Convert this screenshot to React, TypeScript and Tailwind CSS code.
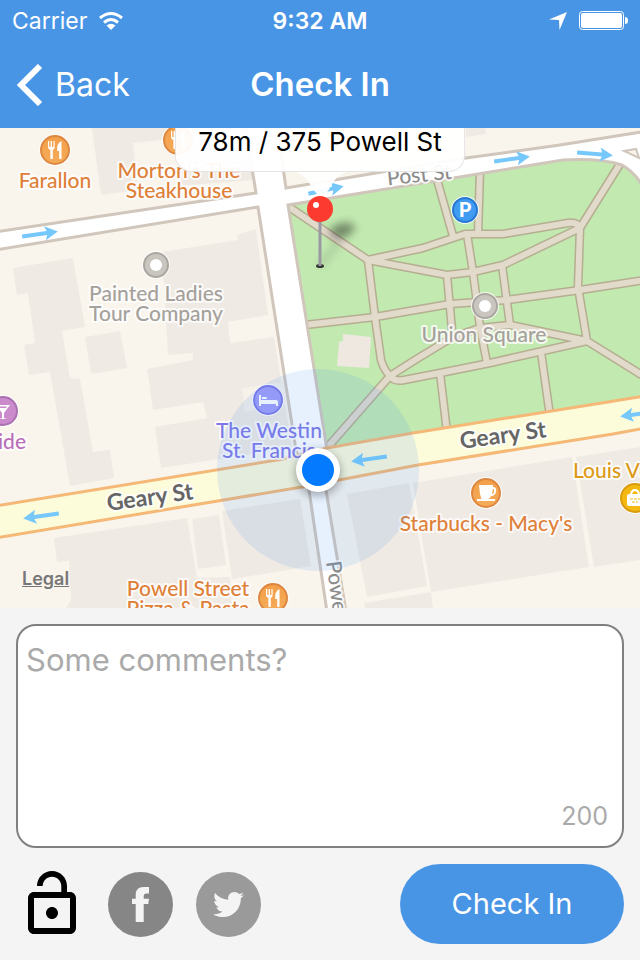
import React, { useState } from 'react';
import { FaTwitter } from 'react-icons/fa';

const MAX_COMMENT = 200;

const buildings = [
  '92,128 180,128 250,128 252,180 178,186 178,138 133,143 138,190 101,195',
  '162,252 238,240 237,235 256,229 268,315 228,322 230,343 274,337 292,448 161,468 155,427 207,418 203,402 153,410 147,369 193,360 193,353 168,355',
  '13,268 73,258 85,327 62,331 70,378 80,379 93,452 110,450 114,478 70,486 50,372 29,375 24,345 35,343 28,293 17,295',
  '85,337 120,331 127,368 91,374',
  '54,538 187,518 197,578 230,577 232,608 66,608 71,600 69,561 57,562',
  '192,519 219,515 226,565 198,569',
  '222,511 300,499 311,566 232,579',
  '347,494 409,483 427,586 367,597',
  '413,483 572,457 589,567 431,592',
  '576,457 640,447 640,560 594,567',
  '364,603 431,592 433,608 365,608',
  '466,128 485,128 486,134 466,137',
];

// Footpaths of Union Square
const footpaths = [
  'M286 205 368 260 423 248 465 234 503 234 568 223Q578 222 580 228',
  'M436 176 453 236',
  'M480 170 478 234',
  'M620 164 580 228 578 287 587 341 645 377',
  'M368 260 447 275 473 272 503 265 580 228',
  'M368 260 375 317 381 360Q384 370 390 376',
  'M305 325 375 317 450 304 507 300 580 290 645 280',
  'M447 275 452 330',
  'M467 234 473 272 480 327 487 363',
  'M502 265 510 325',
  'M390 376 415 360 453 337 480 328 510 325 587 341',
  'M390 376Q394 382 404 380L440 373 490 363 587 341',
  'M390 376 326 449',
  'M440 373 447 432',
  'M541 352 550 416',
];

const Arrow: React.FC<{ x: number; y: number; angle: number }> = ({ x, y, angle }) => (
  <path d="M-18-2H7L5-7 18 0 5 7 7 2H-18Z" fill="#76c8fa" transform={`translate(${x} ${y}) rotate(${angle})`} />
);

const Utensils: React.FC = () => (
  <path
    fill="#fff"
    d="M-7-9h1.200v6h1.400v-6h1.400v6h1.400v-6H-.4V-3Q-.4-.6-2.200 0V9H-4.600V0Q-7-.6-7-3ZM6.500-9V9H4.200V1H2.200Q1.600-7 6.500-9Z"
  />
);

const Marker: React.FC<{ x: number; y: number; fill: string; stroke: string; children?: React.ReactNode }> = ({
  x, y, fill, stroke, children,
}) => (
  <g transform={`translate(${x} ${y})`}>
    <circle r="16" fill="#fff" opacity=".8" />
    <circle r="14" fill={fill} stroke={stroke} strokeWidth="2" />
    {children}
  </g>
);

const PlaceDot: React.FC<{ x: number; y: number }> = ({ x, y }) => (
  <g transform={`translate(${x} ${y})`}>
    <circle r="14" fill="#fff" opacity=".8" />
    <circle r="12" fill="#c9c6c0" stroke="#aaa7a1" strokeWidth="2" />
    <circle r="6" fill="#fff" />
  </g>
);

const MapView: React.FC = () => (
  <svg
    viewBox="0 128 640 480"
    preserveAspectRatio="xMidYMid slice"
    className="absolute inset-0 h-full w-full"
    role="img"
    aria-label="Map"
  >
    <defs>
      <linearGradient id="orange" x1="0" y1="0" x2="0" y2="1">
        <stop offset="0" stopColor="#f3a04a" />
        <stop offset="1" stopColor="#f5ab58" />
      </linearGradient>
      <filter id="soft" x="-50%" y="-50%" width="200%" height="200%">
        <feGaussianBlur stdDeviation="4" />
      </filter>
    </defs>

    <rect y="128" width="640" height="480" fill="#f9f5ed" />
    <g fill="#efeae3">
      {buildings.map((points) => <polygon key={points} points={points} />)}
    </g>
    <polygon points="242,388 283,382 286,405 245,412" fill="#f6f1e9" />

    {/* Park */}
    <path d="M288 205 563 160Q600 158 622 165 640 175 645 190V397L608 402 327 448Z" fill="#c2e9b0" />
    <g fill="none" strokeLinejoin="round">
      <g stroke="#b5ae91" strokeWidth="9">
        {footpaths.map((d) => <path key={d} d={d} />)}
      </g>
      <g stroke="#e2dacb" strokeWidth="6">
        {footpaths.map((d) => <path key={d} d={d} />)}
      </g>
    </g>
    <polygon points="343,334 371,337 369,368 337,366 339,342 343,341" fill="#efe8e1" />

    {/* Streets */}
    <g fill="#fff" stroke="#d0c6bc" strokeWidth="3">
      <path d="M244 120 256 193-5 232V250L258 207 296 450 309 490 327 612H346L326 490 327 450 288 205 563 160Q600 158 622 165 636 173 645 190L650 131 635 133 560 145 466 158 286 188 276 120Z" />
    </g>
    <path d="M624 151 636 149 639 158Z" fill="#f9f5ed" stroke="#d0c6bc" strokeWidth="2" />
    <path d="M-5 506 283 459 327 448 413 433 608 402 645 396V428L613 434 418 465 302 487-5 538Z" fill="#fcfbda" stroke="#f5b877" strokeWidth="3" />

    <Arrow x={40} y={234} angle={-8} />
    <Arrow x={326} y={190} angle={-12} />
    <Arrow x={512} y={159} angle={-8} />
    <Arrow x={595} y={154} angle={5} />
    <Arrow x={41} y={516} angle={172} />
    <Arrow x={369} y={459} angle={172} />
    <Arrow x={638} y={414} angle={172} />

    <Marker x={55} y={150} fill="url(#orange)" stroke="#dd8740"><Utensils /></Marker>
    <Marker x={178} y={140} fill="url(#orange)" stroke="#dd8740"><Utensils /></Marker>
    <Marker x={273} y={598} fill="url(#orange)" stroke="#dd8740"><Utensils /></Marker>
    <Marker x={486} y={493} fill="url(#orange)" stroke="#dd8740">
      <path d="M-7-8H7V-6Q11-6 10-1 9 3 5 3 4 6 2 6H9V8H-9V6H-4Q-6 5-7-8ZM7-4 6 1Q8 1 8-2 8.500-4 7-4Z" fill="#fff" fillRule="evenodd" />
    </Marker>
    <Marker x={635} y={498} fill="#f3b911" stroke="#d99b0c">
      <path d="M-8-2Q-8-4-6-4H-5Q-4-9 0-9 4-9 5-4H6Q8-4 8-2V6Q8 8 6 8H-6Q-8 8-8 6ZM-3-4H3Q2-7 0-7-2-7-3-4Z" fill="#fff" fillRule="evenodd" />
      <path d="M-5 1H5M-3 4H3" stroke="#f3b911" strokeDasharray="3 1" />
    </Marker>
    <Marker x={3} y={411} fill="#cb8acb" stroke="#aa70b0">
      <path d="M-7-6H7L1 2V7L4 8H-4L-1 7V2ZM-4-4.500-3-3H3L4-4.500Z" fill="#fff" fillRule="evenodd" />
    </Marker>
    <Marker x={268} y={400} fill="#9f9bf7" stroke="#7d78e6">
      <path d="M-9-5H-7V0H8Q10 0 10 2V6H8V4H-7V6H-9ZM-6-3H-2Q-1-3-1-1H-6Z" fill="#fff" />
    </Marker>
    <g transform="translate(465 210)">
      <circle r="14" fill="#fff" opacity=".8" />
      <circle r="12" fill="#409bf2" stroke="#2778d2" strokeWidth="2" />
      <text y="7" textAnchor="middle" className="fill-white font-['Lato',sans-serif] text-[20px] font-black">P</text>
    </g>
    <PlaceDot x={156} y={265} />
    <PlaceDot x={485} y={306} />

    <g
      className="font-['Lato',sans-serif] text-[21px] font-medium"
      textAnchor="middle"
      stroke="#fff"
      strokeOpacity=".8"
      strokeWidth="4"
      strokeLinejoin="round"
      paintOrder="stroke"
    >
      <g fill="#df8038">
        <text x="55" y="188">Farallon</text>
        <text x="179" y="178">Morton's The</text>
        <text x="179" y="198">Steakhouse</text>
        <text x="486" y="531">Starbucks - Macy's</text>
        <text x="188" y="596">Powell Street</text>
        <text x="188" y="616">Pizza &amp; Pasta</text>
      </g>
      <g fill="#a5a19b">
        <text x="156" y="301">Painted Ladies</text>
        <text x="156" y="321">Tour Company</text>
        <text x="484" y="342">Union Square</text>
      </g>
      <g fill="#8078e8">
        <text x="269" y="438">The Westin</text>
        <text x="269" y="458">St. Francis</text>
      </g>
      <text x="12" y="449" fill="#b96fba">ide</text>
      <text x="573" y="478" fill="#dc9a16" textAnchor="start">Louis Vuitton</text>
      <g fill="#8c8c8c">
        <text transform="translate(420 182) rotate(-6)">Post St</text>
        <text transform="translate(326 562) rotate(82)" textAnchor="start">Powell St</text>
      </g>
      <g fill="#666" className="text-[23px] font-bold">
        <text transform="translate(504 443) rotate(-8)">Geary St</text>
        <text transform="translate(151 505) rotate(-8)">Geary St</text>
      </g>
    </g>

    {/* Current location */}
    <circle cx="318" cy="470" r="101" fill="#4594f4" opacity=".13" />
    <circle cx="318" cy="473" r="23" opacity=".3" filter="url(#soft)" />
    <circle cx="318" cy="470" r="22" fill="#fff" />
    <circle cx="318" cy="470" r="16" fill="#047aff" />

    {/* Callout tail */}
    <path d="M289 171Q304 172 311 186 317 196 321 196 326 196 331 186 338 172 353 171Z" fill="#fff" opacity=".95" />

    {/* Pin */}
    <path d="M320 266 345 233" stroke="#333" strokeWidth="5" opacity=".2" filter="url(#soft)" />
    <ellipse cx="342" cy="230" rx="13" ry="7" opacity=".4" filter="url(#soft)" transform="rotate(-15 342 230)" />
    <ellipse cx="320" cy="266" rx="4" ry="2" fill="#333" />
    <path d="M320 220V266" stroke="#9a9aa2" strokeWidth="3" />
    <circle cx="320" cy="209" r="13" fill="#fc3a30" />
    <circle cx="316" cy="205" r="3" fill="#fff" />
  </svg>
);

const StatusBar: React.FC = () => (
  <div className="grid h-[42px] grid-cols-3 items-center px-3 text-[23px]">
    <div className="flex items-center gap-3">
      <span>Carrier</span>
      <svg width="24" height="18" viewBox="0 0 24 18" fill="none" stroke="currentColor" strokeWidth="3">
        <path d="M1 6Q12-3 23 6" />
        <path d="M5 10.500Q12 4.500 19 10.500" />
        <path d="M12 18 7.500 13.500Q12 10 16.500 13.500Z" fill="currentColor" stroke="none" />
      </svg>
    </div>
    <span className="text-center font-semibold">9:32 AM</span>
    <div className="flex items-center justify-end gap-3">
      <svg width="18" height="18" viewBox="0 0 18 18" fill="currentColor"><path d="M18 0 10.500 18 10 8 0 7.500Z" /></svg>
      <svg width="49" height="20" viewBox="0 0 49 20">
        <rect x=".5" y=".5" width="44" height="18" rx="3" fill="none" stroke="currentColor" />
        <rect x="2" y="2" width="41" height="15" rx="2" fill="currentColor" />
        <path d="M46 6Q49 6 49 9.500 49 13 46 13Z" fill="currentColor" />
      </svg>
    </div>
  </div>
);

const App: React.FC = () => {
  const [comment, setComment] = useState<string>('');
  const [isPrivate, setIsPrivate] = useState<boolean>(false);

  return (
    <div className="flex min-h-screen flex-col bg-[#f4f4f4] font-['Inter',sans-serif]">
      <header className="bg-[#4995e5] text-white">
        <StatusBar />
        <nav className="grid h-[86px] grid-cols-3 items-center px-4">
          <button type="button" className="flex items-center gap-3 text-[32px]">
            <svg width="27" height="42" viewBox="0 0 27 42" fill="none" stroke="currentColor" strokeWidth="6">
              <path d="M24 2 5 21 24 40" />
            </svg>
            Back
          </button>
          <h1 className="text-center text-[33px] font-semibold">Check In</h1>
        </nav>
      </header>

      <section className="relative min-h-80 flex-1 overflow-hidden">
        <MapView />
        <div className="absolute top-0 left-1/2 h-11 w-[290px] -translate-x-1/2 rounded-b-2xl border border-t-0 border-black/10 bg-white/95 text-center text-[26px] leading-7 whitespace-nowrap">
          78m / 375 Powell St
        </div>
        <a href="#legal" className="absolute bottom-4 left-[22px] text-[18px] font-semibold text-[#777] underline">
          Legal
        </a>
      </section>

      <form className="flex flex-col gap-4 p-4" onSubmit={(e) => e.preventDefault()}>
        <div className="relative">
          <textarea
            aria-label="Some comments?"
            placeholder="Some comments?"
            maxLength={MAX_COMMENT}
            value={comment}
            onChange={(e) => setComment(e.target.value)}
            className="block h-56 w-full resize-none rounded-[20px] border-2 border-[#808080] bg-white px-2 py-3.5 text-[31px] leading-10 outline-none placeholder:text-[#aaa]"
          />
          <span className="absolute right-4 bottom-4 text-[25px] leading-8 text-[#aaa]">{MAX_COMMENT - comment.length}</span>
        </div>
        <div className="flex items-center justify-between">
          <div className="flex gap-4">
            <button type="button" aria-label="Privacy" aria-pressed={isPrivate} onClick={() => setIsPrivate(!isPrivate)}>
              <svg width="72" height="72" viewBox="0 0 24 24">
                <path d="M12 17c1.100 0 2-.9 2-2s-.9-2-2-2-2 .9-2 2 .9 2 2 2zm6-9h-1V6c0-2.760-2.240-5-5-5S7 3.240 7 6h1.900c0-1.710 1.390-3.100 3.100-3.100 1.710 0 3.100 1.390 3.100 3.100v2H6c-1.100 0-2 .9-2 2v10c0 1.100.9 2 2 2h12c1.100 0 2-.9 2-2V10c0-1.100-.9-2-2-2zm0 12H6V10h12v10z" />
              </svg>
            </button>
            <button type="button" aria-label="Share on Facebook" className="flex size-18 items-center justify-center">
              <svg width="65" height="65" viewBox="0 0 65 65">
                <circle cx="32.500" cy="32.500" r="32.500" fill="#868686" />
                <path d="M41 15V21.500H38Q35.700 21.500 35.700 24V26.700H41L40.300 32H35.700V50H27.700V32H24V26.700H27.700V23Q27.700 15 35.500 15Z" fill="#f4f4f4" />
              </svg>
            </button>
            <button type="button" aria-label="Share on Twitter" className="flex size-18 items-center justify-center">
              <span className="flex size-[65px] items-center justify-center rounded-full bg-[#9a9a9a] text-[#f4f4f4]">
                <FaTwitter size={31} />
              </span>
            </button>
          </div>
          <button type="submit" className="h-20 w-56 rounded-full bg-[#4995e5] text-[29px] text-white">
            Check In
          </button>
        </div>
      </form>
    </div>
  );
};

export default App;
